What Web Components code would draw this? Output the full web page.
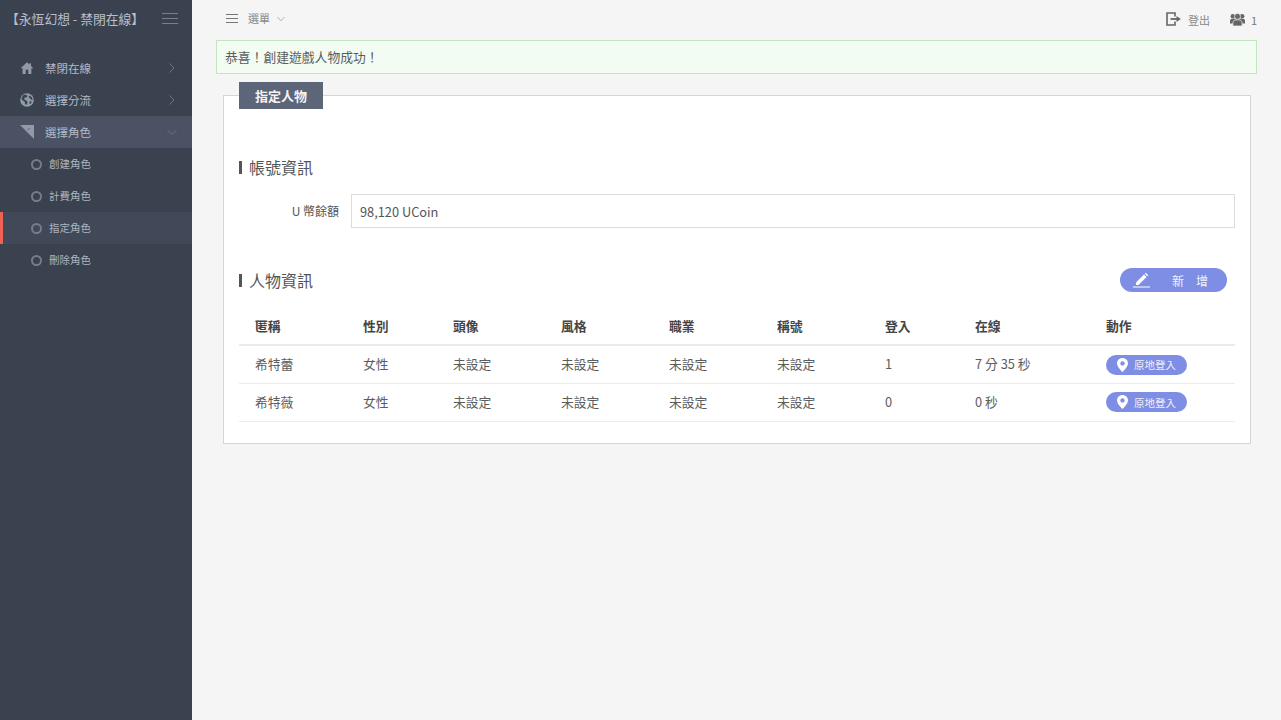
<!DOCTYPE html>
<html lang="zh-Hant">
<head>
<meta charset="utf-8">
<title>永恆幻想</title>
<style>
  html, body { margin: 0; height: 100%; }
  body {
    background: #f5f5f5;
    color: #555;
    font-family: "Noto Sans CJK TC", "Noto Sans", sans-serif;
    font-size: 13px;
  }
  #app { display: flex; height: 720px; overflow: hidden; }
  #main { flex: 1; min-width: 0; display: flex; flex-direction: column; padding: 0 24px 0 24px; }
</style>
</head>
<body>
<div id="app">
  <app-sidebar>
    <side-item icon="home" arrow="right">禁閉在線</side-item>
    <side-item icon="globe" arrow="right">選擇分流</side-item>
    <side-item icon="corner" arrow="down" open>選擇角色</side-item>
    <side-sub>創建角色</side-sub>
    <side-sub>計費角色</side-sub>
    <side-sub active>指定角色</side-sub>
    <side-sub>刪除角色</side-sub>
  </app-sidebar>
  <div id="main">
    <top-bar></top-bar>
    <alert-box>恭喜！創建遊戲人物成功！</alert-box>
    <panel-card heading="指定人物">
      <section-title>帳號資訊</section-title>
      <coin-row label="U 幣餘額" value="98,120 UCoin"></coin-row>
      <section-title action="新　增" class="second">人物資訊</section-title>
      <char-table></char-table>
    </panel-card>
  </div>
</div>

<script>
const ICONS = {
  home: '<path d="M7 1.200 .6 7.300H2.600V13H5.700V8.800H8.300V13H11.400V7.300H13.400L11 5V2.200H9.500V3.600Z" fill="currentColor"/>',
  globe: '<circle cx="7" cy="7" r="6.800" fill="currentColor"/><path d="M3 2.200 5.600 1.600 7.600 3 6.600 4.600 4.800 4.400 4.200 6.400 6.600 7.600 7.600 9.600 6.400 12 5 11 4.800 8.800 2.400 7.200 1.400 5.400ZM9.400 2.600 11.600 4 12.800 7 11 6.600 9.600 5 8.600 3.800ZM9.800 8.200 11.800 8.600 10.600 11 9.400 10.400Z" fill="#3a4250"/>',
  corner: '<path d="M0 0H14V14Z" fill="currentColor"/><path d="M7.200 3.600 8.200 4.800 10 3" fill="none" stroke="#4a5264" stroke-width=".7"/>'
};

class AppSidebar extends HTMLElement {
  constructor() {
    super();
    this.attachShadow({ mode: "open" }).innerHTML = `
      <style>
        :host {
          display: block;
          flex: 0 0 192px;
          width: 192px;
          background: #3a4250;
          color: #b4bac4;
        }
        .brand {
          display: flex;
          align-items: center;
          justify-content: space-between;
          height: 36px;
          padding: 0 14px 0 6px;
          font-size: 12.8px;
          white-space: nowrap;
          color: #b9bfc9;
        }
        .brand svg { display: block; margin-top: 2px; }
        .menu { padding-top: 16px; }
      </style>
      <div class="brand">
        <span>【永恆幻想 - 禁閉在線】</span>
        <svg width="16" height="12" viewBox="0 0 16 12" stroke="#79808d" stroke-width="1"><path d="M0 .5H16M0 5.500H16M0 10.500H16"/></svg>
      </div>
      <div class="menu"><slot></slot></div>
    `;
  }
}

class SideItem extends HTMLElement {
  constructor() {
    super();
    this.attachShadow({ mode: "open" });
  }
  connectedCallback() {
    const icon = this.getAttribute("icon");
    const down = this.getAttribute("arrow") === "down";
    this.shadowRoot.innerHTML = `
      <style>
        :host {
          display: flex;
          align-items: center;
          height: 32px;
          padding-left: 20px;
          font-size: 11.5px;
          color: #b4bac4;
        }
        :host([open]) { background: #4a5264; }
        .icon { width: 14px; height: 14px; color: #929aa8; flex: none; }
        .label { margin-left: 11px; flex: 1; padding-bottom: 1px; }
        .arrow { flex: none; margin-right: 15px; }
      </style>
      <svg class="icon" viewBox="0 0 14 14">${ICONS[icon]}</svg>
      <span class="label"><slot></slot></span>
      <svg class="arrow" width="10" height="10" viewBox="0 0 10 10" fill="none" stroke="#6d7482" stroke-width="1">
        <path d="${down ? "M.5 3 5 7.500 9.500 3" : "M2.500 .5 7 5 2.500 9.500"}"/>
      </svg>
    `;
  }
}

class SideSub extends HTMLElement {
  constructor() {
    super();
    this.attachShadow({ mode: "open" }).innerHTML = `
      <style>
        :host {
          display: flex;
          align-items: center;
          height: 32px;
          padding-left: 31px;
          font-size: 10.5px;
          color: #aeb4bf;
          box-sizing: border-box;
        }
        :host([active]) {
          background: #414959;
          border-left: 3px solid #ef6155;
          padding-left: 28px;
        }
        .dot {
          width: 11px;
          height: 11px;
          box-sizing: border-box;
          border: 2px solid #767d8a;
          border-radius: 50%;
          margin-right: 7px;
          flex: none;
        }
        .text { padding-bottom: 2px; }
      </style>
      <span class="dot"></span><span class="text"><slot></slot></span>
    `;
  }
}

class TopBar extends HTMLElement {
  constructor() {
    super();
    this.attachShadow({ mode: "open" }).innerHTML = `
      <style>
        :host {
          display: flex;
          align-items: center;
          justify-content: space-between;
          height: 40px;
          padding: 0 0 3px 10px;
          box-sizing: border-box;
          font-size: 11px;
          color: #8a8a8a;
        }
        .group { display: flex; align-items: center; }
        svg { display: block; flex: none; }
        .chev { margin-left: 7px; }
        .menu-text { margin-left: 10px; padding-bottom: 1px; }
        .logout { margin-left: 7px; padding-top: 2px; }
        .users { margin-left: 20px; margin-top: 1px; }
        .count { margin-left: 6px; font-size: 11px; padding-top: 2px; color: #777; }
      </style>
      <div class="group">
        <svg width="12" height="9" viewBox="0 0 12 9" stroke="#777" stroke-width="1"><path d="M0 .5H12M0 4.500H12M0 8.500H12"/></svg>
        <span class="menu-text">選單</span>
        <svg class="chev" width="8" height="8" viewBox="0 0 8 8" fill="none" stroke="#b0b0b0"><path d="M.5 2 4 5.800 7.500 2"/></svg>
      </div>
      <div class="group">
        <svg width="15" height="14" viewBox="0 0 15 14" fill="none"><path d="M9 4.500V1H1V13H9V9.500" stroke="#666" stroke-width="1.600"/><path d="M4.500 7H11" stroke="#666" stroke-width="1.800"/><path d="M10.500 4 14.800 7 10.500 10Z" fill="#666"/></svg>
        <span class="logout">登出</span>
        <svg class="users" width="15" height="13" viewBox="0 0 15 13" fill="#666" stroke="#f5f5f5" stroke-width=".7">
          <circle cx="2.900" cy="3.200" r="2.300" stroke="none"/>
          <circle cx="12.100" cy="3.200" r="2.300" stroke="none"/>
          <path d="M0 10.500V7.500C0 6.300 1.200 5.700 3 5.700H12C13.800 5.700 15 6.300 15 7.500V10.500Z" stroke="none"/>
          <circle cx="7.500" cy="3.400" r="3"/>
          <path d="M2.900 13V9.600C2.900 7.900 4.700 6.800 7.500 6.800S12.100 7.900 12.100 9.600V13Z"/>
        </svg>
        <span class="count">1</span>
      </div>
    `;
  }
}

class AlertBox extends HTMLElement {
  constructor() {
    super();
    this.attachShadow({ mode: "open" }).innerHTML = `
      <style>
        :host {
          display: flex;
          align-items: center;
          height: 34px;
          box-sizing: border-box;
          padding: 0 8px 2px 8px;
          background: #f3fcf3;
          border: 1px solid #c3e6c0;
          font-size: 12.800px;
          color: #5c5c5c;
        }
      </style>
      <slot></slot>
    `;
  }
}

class PanelCard extends HTMLElement {
  constructor() {
    super();
    this.attachShadow({ mode: "open" });
  }
  connectedCallback() {
    this.shadowRoot.innerHTML = `
      <style>
        :host {
          display: block;
          position: relative;
          margin: 21px 6px 0 7px;
          height: 349px;
          box-sizing: border-box;
          background: #fff;
          border: 1px solid #d5d5d5;
          padding: 59px 15px 0 15px;
        }
        .tab {
          position: absolute;
          left: 15px;
          top: -14px;
          width: 84px;
          height: 27px;
          background: #5d6579;
          color: #f2f3f5;
          font-size: 13px;
          font-weight: 700;
          display: flex;
          align-items: center;
          justify-content: center;
        }
      </style>
      <div class="tab">${this.getAttribute("heading")}</div>
      <slot></slot>
    `;
  }
}

class SectionTitle extends HTMLElement {
  constructor() {
    super();
    this.attachShadow({ mode: "open" });
  }
  connectedCallback() {
    const action = this.getAttribute("action");
    this.shadowRoot.innerHTML = `
      <style>
        :host {
          display: flex;
          align-items: center;
          height: 24px;
          font-size: 16px;
          color: #555;
        }
        :host(.second) { margin-top: 40px; padding-right: 8px; height: 24px; }
        .bar { width: 3px; height: 13px; background: #555; margin-right: 8px; flex: none; }
        .text { flex: 1; margin-left: -1px; }
        .btn {
          display: flex;
          align-items: center;
          width: 107px;
          height: 24px;
          box-sizing: border-box;
          padding-left: 13px;
          border-radius: 12px;
          background: #7f8ee5;
          color: #f0f2fc;
          font-size: 12px;
        }
        .btn span { margin-left: 22px; white-space: pre; }
        .btn svg { flex: none; }
      </style>
      <span class="bar"></span>
      <span class="text"><slot></slot></span>
      ${action ? `<div class="btn">
        <svg width="17" height="16" viewBox="0 0 17 16"><path d="M3 10.500 11 2.500 13.500 5 5.500 13H3Z" fill="#fff"/><path d="M11.800 1.800 12.800 .8 15.200 3.200 14.200 4.200Z" fill="#fff"/><path d="M0 15H17" stroke="#fff" stroke-width="1"/></svg>
        <span>${action}</span></div>` : ""}
    `;
  }
}

class CoinRow extends HTMLElement {
  constructor() {
    super();
    this.attachShadow({ mode: "open" });
  }
  connectedCallback() {
    this.shadowRoot.innerHTML = `
      <style>
        :host { display: flex; align-items: center; margin-top: 15px; height: 34px; }
        label {
          width: 100px;
          text-align: right;
          font-size: 12px;
          color: #555;
          margin-right: 12px;
          padding-bottom: 2px;
        }
        .value {
          flex: 1;
          height: 34px;
          box-sizing: border-box;
          display: flex;
          align-items: center;
          padding: 0 8px;
          border: 1px solid #dcdcdc;
          background: #fff;
          color: #555;
          font-size: 12.800px;
        }
      </style>
      <label>${this.getAttribute("label")}</label>
      <div class="value">${this.getAttribute("value")}</div>
    `;
  }
}

class LoginPill extends HTMLElement {
  constructor() {
    super();
    this.attachShadow({ mode: "open" }).innerHTML = `
      <style>
        :host {
          display: inline-flex;
          align-items: center;
          width: 81px;
          height: 20px;
          box-sizing: border-box;
          padding-left: 11px;
          border-radius: 10px;
          background: #7f8ee5;
          color: #eef0fb;
          font-size: 10.500px;
          vertical-align: middle;
        }
        svg { flex: none; margin-right: 6px; }
      </style>
      <svg width="11" height="14" viewBox="0 0 11 14"><path fill-rule="evenodd" d="M5.500 0C8.600 0 11 2.300 11 5.300 11 8.500 7.500 12 5.500 14 3.500 12 0 8.500 0 5.300 0 2.300 2.400 0 5.500 0ZM5.500 3.200A2.200 2.200 0 1 0 5.500 7.600 2.200 2.200 0 1 0 5.500 3.200Z" fill="#fff"/></svg>
      <slot></slot>
    `;
  }
}

class CharTable extends HTMLElement {
  constructor() {
    super();
    const cols = ["匿稱", "性別", "頭像", "風格", "職業", "稱號", "登入", "在線", "動作"];
    const rows = [
      ["希特蕾", "女性", "未設定", "未設定", "未設定", "未設定", "1", "7 分 35 秒"],
      ["希特薇", "女性", "未設定", "未設定", "未設定", "未設定", "0", "0 秒"]
    ];
    this.attachShadow({ mode: "open" }).innerHTML = `
      <style>
        :host { display: block; margin-top: 12px; }
        table { width: 100%; border-collapse: collapse; table-layout: fixed; font-size: 12.800px; color: #5c5c5c; }
        th, td { padding: 0 0 0 16px; text-align: left; }
        th { height: 41px; padding-top: 2px; font-weight: 700; color: #444; border-bottom: 2px solid #e9ecef; box-sizing: border-box; }
        td { height: 38px; padding-bottom: 2px; box-sizing: border-box; border-bottom: 1px solid #e9ecef; }
        td login-pill { margin-top: 2px; }
        col.a { width: 108px; }
        col.b { width: 90px; }
        col.c { width: 108px; }
        col.e { width: 131px; }
      </style>
      <table>
        <colgroup>
          <col class="a"><col class="b"><col class="c"><col class="c"><col class="c"><col class="c"><col class="b"><col class="e"><col>
        </colgroup>
        <thead><tr>${cols.map(c => `<th>${c}</th>`).join("")}</tr></thead>
        <tbody>
          ${rows.map(r => `<tr>${r.map(c => `<td>${c}</td>`).join("")}<td><login-pill>原地登入</login-pill></td></tr>`).join("")}
        </tbody>
      </table>
    `;
  }
}

customElements.define("app-sidebar", AppSidebar);
customElements.define("side-item", SideItem);
customElements.define("side-sub", SideSub);
customElements.define("top-bar", TopBar);
customElements.define("alert-box", AlertBox);
customElements.define("panel-card", PanelCard);
customElements.define("section-title", SectionTitle);
customElements.define("coin-row", CoinRow);
customElements.define("login-pill", LoginPill);
customElements.define("char-table", CharTable);
</script>
</body>
</html>
